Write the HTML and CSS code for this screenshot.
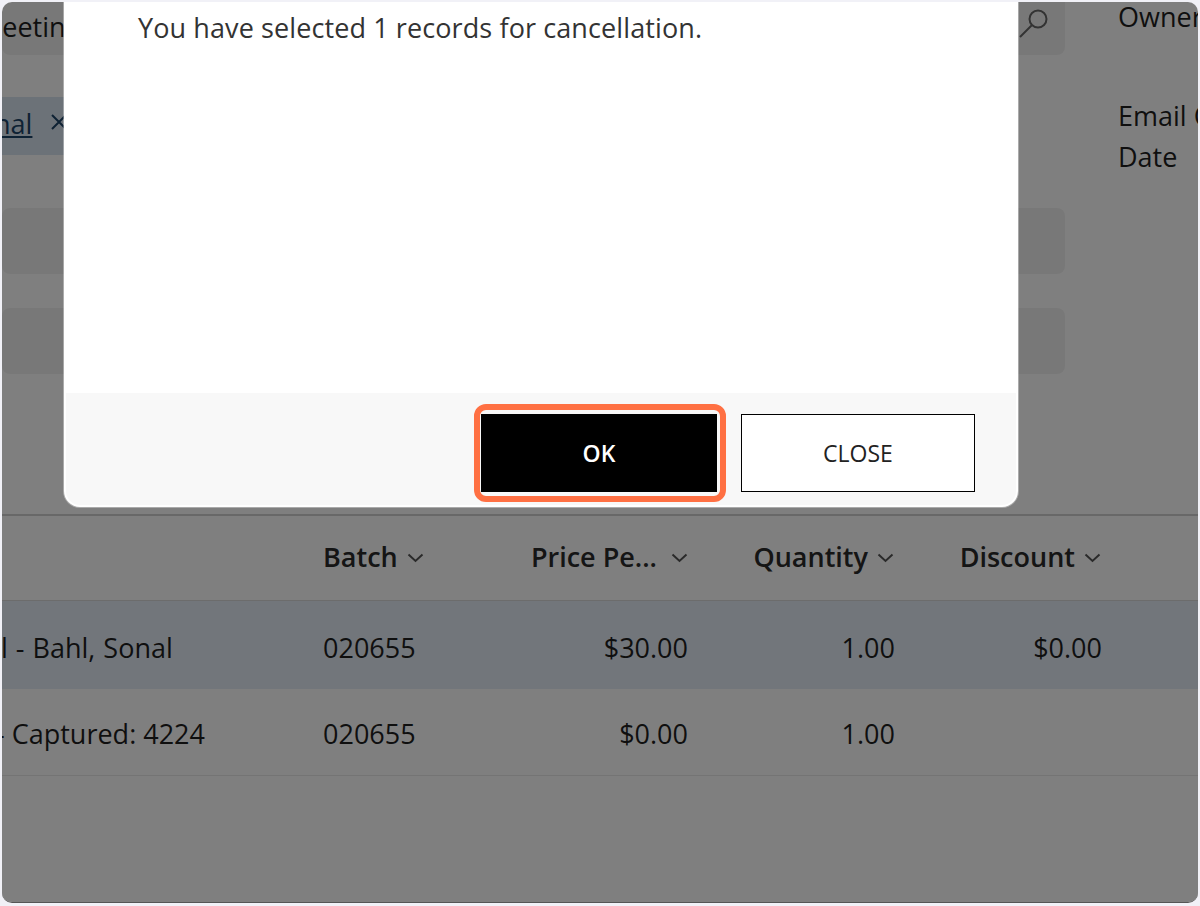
FILE: index.html
```html
<!DOCTYPE html>
<html lang="en">
<head>
    <meta charset="UTF-8">
    <title>Cancel Records</title>
    <link rel="stylesheet" href="styles.css">
</head>
<body>
    <div class="window">
        <div class="page">
            <div class="form-area">
                <div class="fields">
                    <div class="field field-search">
                        <span class="field-text">Meeting</span>
                        <svg class="search-icon" width="30" height="30" viewBox="0 0 30 30" fill="none" stroke="#666" stroke-width="2">
                            <circle cx="20" cy="11" r="8.5"></circle>
                            <line x1="14" y1="17" x2="2" y2="29"></line>
                        </svg>
                    </div>
                    <div class="tag">
                        <a href="#">Sonal</a>
                        <svg class="tag-x" width="16" height="16" viewBox="0 0 16 16" fill="none" stroke="currentColor" stroke-width="2"><path d="M1 1l14 14M15 1L1 15"></path></svg>
                    </div>
                    <div class="field field-empty"></div>
                    <div class="field field-empty"></div>
                </div>
                <div class="side-labels">
                    <div class="side-label">Owner</div>
                    <div class="side-label side-label-email">Email Opt</div>
                    <div class="side-label">Date</div>
                </div>
            </div>
            <div class="table">
                <div class="table-row table-head">
                    <div class="cell cell-name"></div>
                    <div class="cell cell-batch">Batch <svg class="chev" width="17" height="10" viewBox="0 0 17 10"><path d="M1.5 1.5l7 6.5 7-6.5"></path></svg></div>
                    <div class="cell cell-price">Price Pe... <svg class="chev chev-price" width="17" height="10" viewBox="0 0 17 10"><path d="M1.5 1.5l7 6.5 7-6.5"></path></svg></div>
                    <div class="cell cell-qty">Quantity <svg class="chev" width="17" height="10" viewBox="0 0 17 10"><path d="M1.5 1.5l7 6.5 7-6.5"></path></svg></div>
                    <div class="cell cell-disc">Discount <svg class="chev" width="17" height="10" viewBox="0 0 17 10"><path d="M1.5 1.5l7 6.5 7-6.5"></path></svg></div>
                </div>
                <div class="table-row row-selected">
                    <div class="cell cell-name"><span class="name-one">l - Bahl, Sonal</span></div>
                    <div class="cell cell-batch">020655</div>
                    <div class="cell cell-price">$30.00</div>
                    <div class="cell cell-qty">1.00</div>
                    <div class="cell cell-disc">$0.00</div>
                </div>
                <div class="table-row row-plain">
                    <div class="cell cell-name"><span class="name-two">- Captured: 4224</span></div>
                    <div class="cell cell-batch">020655</div>
                    <div class="cell cell-price">$0.00</div>
                    <div class="cell cell-qty">1.00</div>
                    <div class="cell cell-disc"></div>
                </div>
            </div>
        </div>
        <div class="overlay"></div>
        <div class="dialog">
            <div class="dialog-body">You have selected 1 records for cancellation.</div>
            <div class="dialog-footer">
                <button class="btn btn-ok">OK</button>
                <button class="btn btn-close">CLOSE</button>
            </div>
        </div>
    </div>
</body>
</html>
```

FILE: styles.css
```css
* {
    box-sizing: border-box;
}

body {
    margin: 0;
    height: 906px;
    padding: 2px 2px 3px 2px;
    background: #f1f1f7;
    font-family: "Open Sans", "Noto Sans", sans-serif;
    overflow: hidden;
}

.window {
    position: relative;
    height: 100%;
    border-radius: 10px;
    border-bottom: 1px solid #555;
    overflow: hidden;
    background: #fff;
}

.page {
    font-size: 27px;
    color: #1f1f1f;
}

.form-area {
    display: flex;
    height: 512px;
}

.fields {
    width: 1063px;
    flex: none;
}

.field {
    background: #f1f1f1;
    border-radius: 8px;
    height: 66px;
    margin-bottom: 34px;
}

.field-search {
    display: flex;
    justify-content: space-between;
    height: 53px;
    margin-bottom: 42px;
    padding-right: 17px;
    border-radius: 0 0 8px 8px;
}

.field-text {
    margin-left: -24px;
    line-height: 50px;
}

.search-icon {
    margin-top: 6px;
}

.tag {
    display: flex;
    align-items: center;
    gap: 19px;
    height: 58px;
    width: 110px;
    margin-bottom: 53px;
    margin-left: -39px;
    padding-bottom: 4px;
    background: #d8e4f0;
    color: #1d4468;
    line-height: 52px;
    white-space: nowrap;
}

.tag a {
    color: inherit;
}

.tag-x {
    flex: none;
    margin-top: -4px;
}

.side-labels {
    margin-left: 53px;
    white-space: nowrap;
    overflow: hidden;
    flex: 1;
}

.side-label {
    line-height: 41px;
}

.side-label:first-child {
    margin-top: -6px;
}

.side-label-email {
    margin-top: 58px;
}

.table {
    border-top: 2px solid #d0d0d0;
}

.table-row {
    display: grid;
    grid-template-columns: 321px 185px 180px 207px 207px;
    align-items: center;
    border-bottom: 1px solid #e8e8e8;
}

.table-head {
    height: 85px;
    padding-bottom: 4px;
    font-weight: 600;
    color: #2a2a2a;
    border-bottom: 1px solid #d8d8d8;
}

.row-selected {
    height: 88px;
    padding-top: 4px;
    background: #e5edf7;
    border-bottom: 0;
}

.row-plain {
    height: 87px;
    padding-top: 3px;
}

.cell-price,
.cell-qty,
.cell-disc {
    text-align: right;
}

.name-one {
    word-spacing: 1px;
    margin-left: -1px;
}

.name-two {
    margin-left: -6px;
}

.chev {
    fill: none;
    stroke: #555;
    stroke-width: 2;
    margin-left: 2px;
    margin-right: 1px;
    vertical-align: 4px;
}

.chev-price {
    margin-left: 7px;
    margin-right: 0;
}

.overlay {
    position: absolute;
    inset: 0;
    background: rgba(0, 0, 0, 0.5);
}

.dialog {
    position: absolute;
    left: 62px;
    top: -60px;
    width: 954px;
    height: 565px;
    display: flex;
    flex-direction: column;
    background: #fff;
    border: 2px solid #fff;
    border-radius: 16px;
    box-shadow: 0 0 0 1px rgba(255, 255, 255, 0.35);
}

.dialog-body {
    flex: 1;
    padding: 66px 0 0 72px;
    font-size: 27px;
    letter-spacing: 0.1px;
    line-height: 36px;
    color: #333;
}

.dialog-footer {
    display: flex;
    justify-content: flex-end;
    gap: 24px;
    height: 112px;
    padding: 21px 41px 0 0;
    background: #f8f8f8;
    border-radius: 0 0 14px 14px;
}

.btn {
    height: 78px;
    font-family: inherit;
    font-size: 23px;
    border: 1px solid #000;
}

.btn-ok {
    position: relative;
    width: 236px;
    background: #000;
    color: #fff;
    font-weight: 600;
}

/* highlight ring round the OK button */
.btn-ok::after {
    content: "";
    position: absolute;
    inset: -11px -10px -11px -8px;
    border: 6px solid #ff7043;
    border-radius: 12px;
}

.btn-close {
    width: 234px;
    background: #fff;
    color: #222;
}
```
